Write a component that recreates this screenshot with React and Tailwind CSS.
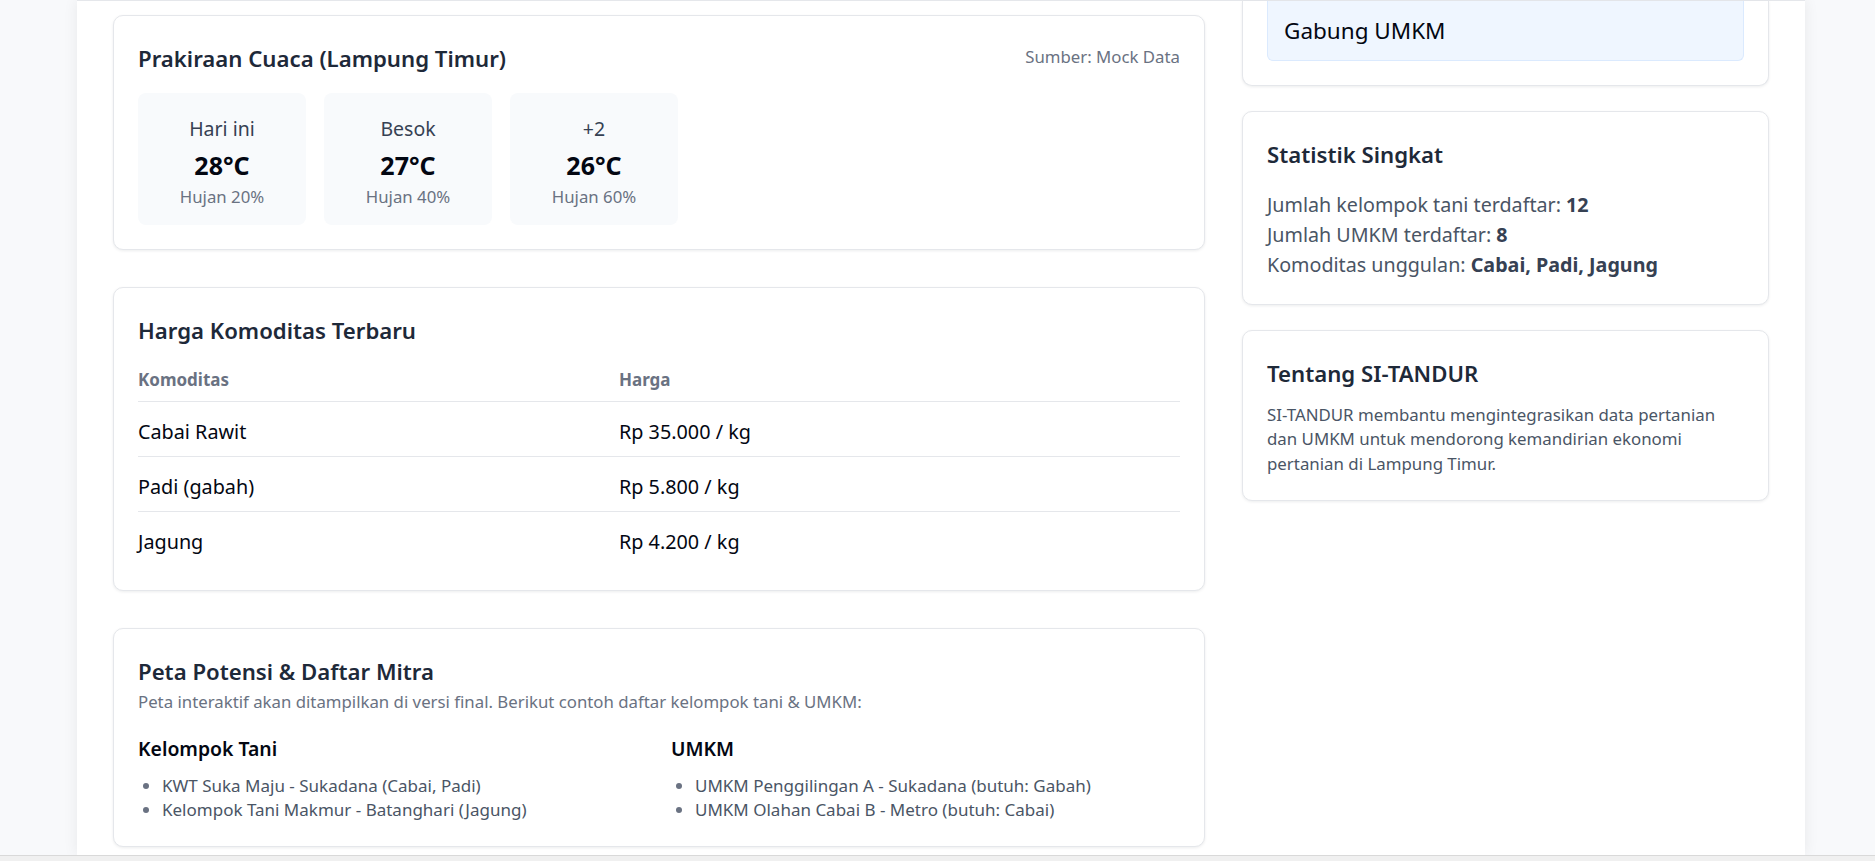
import React from 'react';

const forecast = [
  { day: 'Hari ini', temp: '28°C', rain: 'Hujan 20%' },
  { day: 'Besok', temp: '27°C', rain: 'Hujan 40%' },
  { day: '+2', temp: '26°C', rain: 'Hujan 60%' },
];

const prices = [
  { name: 'Cabai Rawit', price: 'Rp 35.000 / kg' },
  { name: 'Padi (gabah)', price: 'Rp 5.800 / kg' },
  { name: 'Jagung', price: 'Rp 4.200 / kg' },
];

const card = 'bg-white border border-gray-200 rounded-[10px] shadow-[0_1px_3px_rgba(15,23,42,0.08)]';
const cardTitle = 'text-[22.2px] leading-[38px] font-semibold text-gray-800';

export default function App() {
  return (
    <div className="h-[861px] flex flex-col overflow-hidden bg-[#f8f9fb] font-['Noto_Sans',sans-serif]">
      <div className="flex-1 flex overflow-hidden">
        <div className="ml-[77px] w-[1728px] bg-white border-t border-gray-200 shadow-[0_0_14px_rgba(0,0,0,0.07)] px-[36px] flex gap-[37px]">
          {/* Kolom kiri */}
          <div className="flex-1 flex flex-col gap-[37px] pt-[14px]">
            {/* Cuaca */}
            <section className={`${card} p-6`}>
              <div className="flex items-start justify-between">
                <h2 className={cardTitle}>Prakiraan Cuaca (Lampung Timur)</h2>
                <span className="mt-[5px] text-[16.8px] leading-[24px] text-gray-500">Sumber: Mock Data</span>
              </div>
              <div className="mt-[15px] flex gap-[18px]">
                {forecast.map((f) => (
                  <div key={f.day} className="w-[168px] rounded-lg bg-[#f8fafc] pt-[22px] pb-[16px] flex flex-col items-center">
                    <div className="text-[19.5px] leading-[28px] text-gray-700">{f.day}</div>
                    <div className="mt-1 text-[25px] leading-[36px] font-bold text-gray-950">{f.temp}</div>
                    <div className="mt-[2px] text-[16.8px] leading-[24px] text-gray-500">{f.rain}</div>
                  </div>
                ))}
              </div>
            </section>

            {/* Harga komoditas */}
            <section className={`${card} p-6`}>
              <h2 className={cardTitle}>Harga Komoditas Terbaru</h2>
              <div className="mt-[6px]">
                <div className="grid grid-cols-[481px_1fr] h-[46px] items-center pt-[2px] border-b border-gray-200 text-[17px] font-bold text-gray-500">
                  <span>Komoditas</span>
                  <span>Harga</span>
                </div>
                {prices.map((p, i) => (
                  <div
                    key={p.name}
                    className={`grid grid-cols-[481px_1fr] h-[54px] items-center pt-[6px] text-[19.8px] text-gray-950 ${i < prices.length - 1 ? 'border-b border-gray-200 h-[55px]' : ''}`}
                  >
                    <span>{p.name}</span>
                    <span>{p.price}</span>
                  </div>
                ))}
              </div>
            </section>

            {/* Peta */}
            <section className={`${card} p-6`}>
              <h2 className={cardTitle}>Peta Potensi &amp; Daftar Mitra</h2>
              <p className="text-[16.8px] leading-[22px] text-gray-500">
                Peta interaktif akan ditampilkan di versi final. Berikut contoh daftar kelompok tani &amp; UMKM:
              </p>
              <div className="mt-[22px] grid grid-cols-2 gap-6">
                <div>
                  <h3 className="text-[19.4px] leading-[28px] font-semibold text-gray-950">Kelompok Tani</h3>
                  <ul className="mt-[11px] list-disc pl-6 text-[17px] leading-[24px] text-gray-600 marker:text-gray-500">
                    <li>KWT Suka Maju - Sukadana (Cabai, Padi)</li>
                    <li>Kelompok Tani Makmur - Batanghari (Jagung)</li>
                  </ul>
                </div>
                <div>
                  <h3 className="text-[19.4px] leading-[28px] font-semibold text-gray-950">UMKM</h3>
                  <ul className="mt-[11px] list-disc pl-6 text-[17px] leading-[24px] text-gray-600 marker:text-gray-500">
                    <li>UMKM Penggilingan A - Sukadana (butuh: Gabah)</li>
                    <li>UMKM Olahan Cabai B - Metro (butuh: Cabai)</li>
                  </ul>
                </div>
              </div>
            </section>
          </div>

          {/* Kolom kanan */}
          <aside className="w-[527px] flex flex-col gap-[25px]">
            <section className={`${card} border-t-0 rounded-t-none px-6 pb-6`}>
              <div className="h-[60px] flex items-center pl-[16px] bg-[#eff6ff] border border-t-0 border-[#dbeafe] rounded-b-md text-[22.5px] text-gray-950">
                Gabung UMKM
              </div>
            </section>

            <section className={`${card} p-6`}>
              <h2 className={`${cardTitle} mb-[16px]`}>Statistik Singkat</h2>
              <div className="text-[19.7px] leading-[30px] text-gray-600">
                <p>Jumlah kelompok tani terdaftar: <b className="text-gray-700">12</b></p>
                <p>Jumlah UMKM terdaftar: <b className="text-gray-700">8</b></p>
                <p>Komoditas unggulan: <b className="text-gray-700">Cabai, Padi, Jagung</b></p>
              </div>
            </section>

            <section className={`${card} p-6`}>
              <h2 className={`${cardTitle} mb-[10px]`}>Tentang SI-TANDUR</h2>
              <p className="text-[16.85px] leading-[24.3px] text-gray-600">
                SI-TANDUR membantu mengintegrasikan data pertanian dan UMKM untuk mendorong kemandirian ekonomi pertanian di Lampung Timur.
              </p>
            </section>
          </aside>
        </div>
      </div>
      <div className="h-[6px] border-t border-[#d9d9d9] bg-[#f0f0f0]" />
    </div>
  );
}
